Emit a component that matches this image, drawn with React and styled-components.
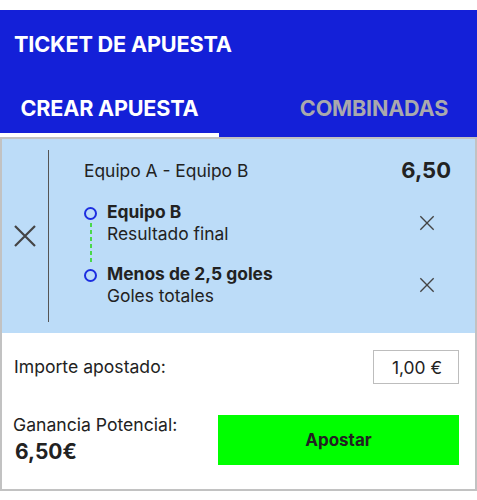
import React from "react";
import styled, { createGlobalStyle } from "styled-components";

const Global = createGlobalStyle`
  html, body { margin: 0; padding: 0; background: #fff; }
  body { font-family: Inter, "Noto Sans", sans-serif; color: #222; }
  #root { padding-top: 10px; }
`;

const Ticket = styled.div`
  width: 477px;
  display: flex;
  flex-direction: column;
`;

const Header = styled.header`
  background: #1420d8;
  display: flex;
  flex-direction: column;
`;

const Title = styled.h1`
  margin: 0;
  padding: 21px 14px 0;
  height: 54px;
  box-sizing: border-box;
  font-size: 21.7px;
  font-weight: 700;
  line-height: 26px;
  color: #fff;
  letter-spacing: -0.2px;
`;

const Tabs = styled.nav`
  display: flex;
  justify-content: space-between;
  height: 73px;
`;

const Tab = styled.div`
  box-sizing: border-box;
  width: ${(p) => p.$w}px;
  padding-top: 31px;
  text-align: center;
  font-size: 21.6px;
  font-weight: 700;
  line-height: 26px;
  letter-spacing: -0.2px;
  color: ${(p) => (p.$active ? "#fff" : "#a9a9ad")};
  border-bottom: 4px solid ${(p) => (p.$active ? "#fff" : "transparent")};
`;

const Body = styled.div`
  border: 2px solid #c2c2c2;
  display: flex;
  flex-direction: column;
`;

const Selection = styled.section`
  background: #bcdcf8;
  display: flex;
  padding: 11px 0;
`;

const RemoveAll = styled.div`
  width: 46px;
  flex: none;
  border-right: 1px solid #555;
  display: flex;
  align-items: center;
  justify-content: center;
`;

const SelContent = styled.div`
  flex: 1;
  padding: 9px 24px 15px 35px;
  display: flex;
  flex-direction: column;
`;

const MatchRow = styled.div`
  display: flex;
  justify-content: space-between;
  align-items: center;
  height: 22px;
`;

const MatchName = styled.span`
  font-size: 17.4px;
  color: #222;
`;

const Odds = styled.span`
  font-size: 22px;
  font-weight: 700;
  color: #222;
`;

const Legs = styled.div`
  margin-top: 20px;
  display: flex;
  flex-direction: column;
  gap: 18px;
`;

const Leg = styled.div`
  display: flex;
  align-items: flex-start;
`;

const Marker = styled.div`
  position: relative;
  width: 13px;
  height: 13px;
  margin-top: 5.5px;
  flex: none;
  box-sizing: border-box;
  border: 2px solid #1c2ee0;
  border-radius: 50%;
`;

const Connector = styled.div`
  position: absolute;
  left: 3.5px;
  top: 14.5px;
  width: 2px;
  height: 40px;
  background: repeating-linear-gradient(
    to bottom,
    #4ad84a 0 4px,
    transparent 4px 7px
  );
`;

const LegText = styled.div`
  flex: 1;
  margin-left: 10px;
  display: flex;
  flex-direction: column;
`;

const LegTitle = styled.span`
  font-size: 17.4px;
  font-weight: 700;
  line-height: 22px;
  color: #222;
`;

const LegSub = styled.span`
  font-size: 17.4px;
  line-height: 22px;
  color: #222;
`;

const LegRemove = styled.div`
  width: 16px;
  margin-right: 16px;
  align-self: center;
  display: flex;
`;

const Footer = styled.section`
  padding: 17px 16px 24px 12px;
  display: flex;
  flex-direction: column;
  gap: 30px;
`;

const StakeRow = styled.div`
  display: flex;
  justify-content: space-between;
  align-items: center;
`;

const Label = styled.span`
  font-size: 17.6px;
  line-height: 22px;
  color: #222;
`;

const StakeInput = styled.div`
  width: 86px;
  height: 34px;
  box-sizing: border-box;
  border: 1px solid #bdbdbd;
  background: #fff;
  display: flex;
  align-items: center;
  justify-content: flex-end;
  padding-right: 16px;
  font-size: 17.4px;
  color: #222;
`;

const WinRow = styled.div`
  display: flex;
  justify-content: space-between;
  align-items: center;
`;

const WinInfo = styled.div`
  display: flex;
  flex-direction: column;
  gap: 3px;
  margin-left: -1px;
`;

const WinAmount = styled.span`
  font-size: 21px;
  line-height: 26px;
  font-weight: 700;
  color: #222;
  margin-left: 2px;
`;

const BetButton = styled.button`
  width: 241px;
  height: 50px;
  border: none;
  background: #00ff00;
  font-family: Inter, "Noto Sans", sans-serif;
  font-size: 17px;
  font-weight: 700;
  color: #222;
  cursor: pointer;
`;

const Cross = ({ size, stroke = 2 }) => (
  <svg width={size} height={size} viewBox="0 0 24 24" fill="none">
    <path
      d="M2 2L22 22M22 2L2 22"
      stroke="#444"
      strokeWidth={stroke}
      strokeLinecap="butt"
    />
  </svg>
);

export default function App() {
  return (
    <>
      <Global />
      <Ticket>
        <Header>
          <Title>TICKET DE APUESTA</Title>
          <Tabs>
            <Tab $active $w={219}>CREAR APUESTA</Tab>
            <Tab $w={206}>COMBINADAS</Tab>
          </Tabs>
        </Header>
        <Body>
          <Selection>
            <RemoveAll>
              <Cross size={24} stroke={2.2} />
            </RemoveAll>
            <SelContent>
              <MatchRow>
                <MatchName>Equipo A - Equipo B</MatchName>
                <Odds>6,50</Odds>
              </MatchRow>
              <Legs>
                <Leg>
                  <Marker>
                    <Connector />
                  </Marker>
                  <LegText>
                    <LegTitle>Equipo B</LegTitle>
                    <LegSub>Resultado final</LegSub>
                  </LegText>
                  <LegRemove>
                    <Cross size={16} stroke={2} />
                  </LegRemove>
                </Leg>
                <Leg>
                  <Marker />
                  <LegText>
                    <LegTitle>Menos de 2,5 goles</LegTitle>
                    <LegSub>Goles totales</LegSub>
                  </LegText>
                  <LegRemove>
                    <Cross size={16} stroke={2} />
                  </LegRemove>
                </Leg>
              </Legs>
            </SelContent>
          </Selection>
          <Footer>
            <StakeRow>
              <Label>Importe apostado:</Label>
              <StakeInput>1,00 €</StakeInput>
            </StakeRow>
            <WinRow>
              <WinInfo>
                <Label>Ganancia Potencial:</Label>
                <WinAmount>6,50€</WinAmount>
              </WinInfo>
              <BetButton>Apostar</BetButton>
            </WinRow>
          </Footer>
        </Body>
      </Ticket>
    </>
  );
}
